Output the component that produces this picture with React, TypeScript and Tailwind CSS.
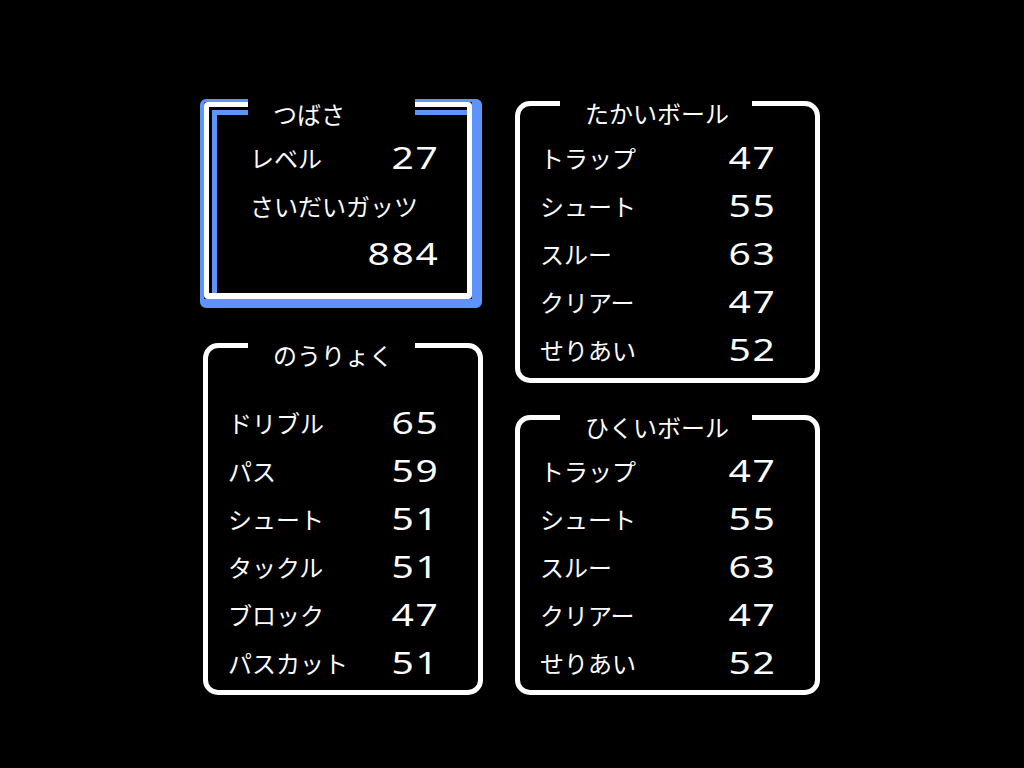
import React from "react";

const BLUE = "border-[#5c94fc]";

const kana = { fontFamily: '"Noto Sans CJK JP", "Noto Sans", sans-serif' };
const digitFont = { fontFamily: '"Noto Sans", "DejaVu Sans", sans-serif' };

type Stat = { label: string; value: string };

const abilities: Stat[] = [
  { label: "ドリブル", value: "65" },
  { label: "パス", value: "59" },
  { label: "シュート", value: "51" },
  { label: "タックル", value: "51" },
  { label: "ブロック", value: "47" },
  { label: "パスカット", value: "51" },
];

const highBall: Stat[] = [
  { label: "トラップ", value: "47" },
  { label: "シュート", value: "55" },
  { label: "スルー", value: "63" },
  { label: "クリアー", value: "47" },
  { label: "せりあい", value: "52" },
];

const lowBall: Stat[] = [
  { label: "トラップ", value: "47" },
  { label: "シュート", value: "55" },
  { label: "スルー", value: "63" },
  { label: "クリアー", value: "47" },
  { label: "せりあい", value: "52" },
];

// every digit takes one 24px tile, like the NES font
function Num({ value }: { value: string }) {
  return (
    <span className="flex" style={digitFont}>
      {value.split("").map((d, i) => (
        <span key={i} className="inline-block w-6 text-center">
          <span className="inline-block scale-x-[1.3] text-[30px] leading-[48px]">{d}</span>
        </span>
      ))}
    </span>
  );
}

function Row({ stat }: { stat: Stat }) {
  return (
    <div className="flex h-12 items-center justify-between">
      <span className="text-[24px] leading-[48px]" style={kana}>
        {stat.label}
      </span>
      <Num value={stat.value} />
    </div>
  );
}

function Title({ text, className }: { text: string; className: string }) {
  return (
    <span
      className={`absolute h-[26px] bg-black text-[24px] leading-[24px] ${className}`}
      style={kana}
    >
      {text}
    </span>
  );
}

function StatBox({
  title,
  stats,
  className,
  titleClass,
}: {
  title: string;
  stats: Stat[];
  className: string;
  titleClass: string;
}) {
  return (
    <div className={`relative rounded-[15px] border-[5px] border-white ${className}`}>
      <Title text={title} className={titleClass} />
      {stats.map((s, i) => (
        <Row key={i} stat={s} />
      ))}
    </div>
  );
}

function PlayerBox() {
  return (
    <div
      className={`relative h-[209px] w-[282px] rounded-[6px] border-t-[3px] border-r-[10px] border-b-[9px] border-l-4 ${BLUE}`}
    >
      <div className="h-full rounded-[4px] border-[5px] border-b-[6px] border-white">
        <div className="h-full border-t-[3px] border-l-[3px] border-black">
          <div className={`h-full border-t-[5px] border-l-[5px] ${BLUE} pt-[19px] pr-[28px] pl-[33px]`}>
            <div className="flex h-12 items-center justify-between">
              <span className="text-[24px] leading-[48px]" style={kana}>
                レベル
              </span>
              <Num value="27" />
            </div>
            <div className="flex h-12 items-center">
              <span className="text-[24px] leading-[48px]" style={kana}>
                さいだいガッツ
              </span>
            </div>
            <div className="flex h-12 items-center justify-end">
              <Num value="884" />
            </div>
          </div>
        </div>
      </div>
      <span
        className="absolute -top-[3px] left-[44px] h-[20px] w-[167px] bg-black pl-[25px] text-[24px] leading-[30px]"
        style={kana}
      >
        つばさ
      </span>
    </div>
  );
}

export default function App() {
  return (
    <div className="flex h-[768px] w-full gap-[30px] overflow-hidden bg-black pt-[99px] pl-[200px] text-[#fcfcfc]">
      <div className="flex w-[285px] flex-col">
        <PlayerBox />
        <StatBox
          title="のうりょく"
          stats={abilities}
          className="mt-[35px] ml-[3px] h-[352px] w-[280px] pt-[51px] pr-[39px] pl-5"
          titleClass="-top-[5px] left-[40px] w-[167px] pl-[25px]"
        />
      </div>
      <div className="flex w-[305px] flex-col">
        <StatBox
          title="たかいボール"
          stats={highBall}
          className="mt-[2px] h-[282px] w-[305px] pt-[28px] pr-[39px] pl-5"
          titleClass="-top-[5px] left-[40px] w-[192px] pl-[25px]"
        />
        <StatBox
          title="ひくいボール"
          stats={lowBall}
          className="mt-[32px] h-[280px] w-[305px] pt-[27px] pr-[39px] pl-5"
          titleClass="-top-[5px] left-[40px] w-[192px] pl-[25px]"
        />
      </div>
    </div>
  );
}
